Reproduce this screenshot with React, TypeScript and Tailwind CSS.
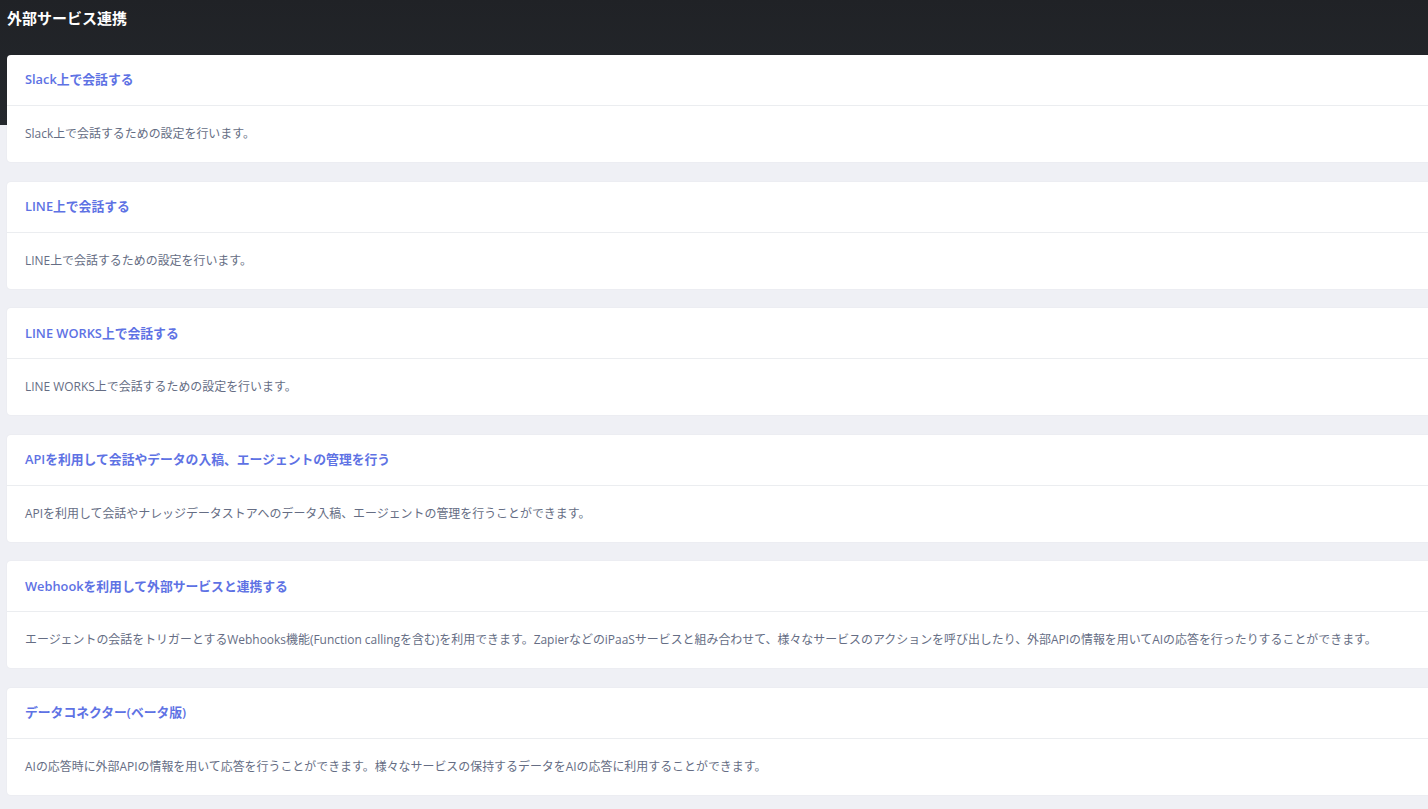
import React from "react";

const items = [
  { title: "Slack上で会話する", body: "Slack上で会話するための設定を行います。" },
  { title: "LINE上で会話する", body: "LINE上で会話するための設定を行います。" },
  { title: "LINE WORKS上で会話する", body: "LINE WORKS上で会話するための設定を行います。" },
  {
    title: "APIを利用して会話やデータの入稿、エージェントの管理を行う",
    body: "APIを利用して会話やナレッジデータストアへのデータ入稿、エージェントの管理を行うことができます。",
  },
  {
    title: "Webhookを利用して外部サービスと連携する",
    body: "エージェントの会話をトリガーとするWebhooks機能(Function callingを含む)を利用できます。ZapierなどのiPaaSサービスと組み合わせて、様々なサービスのアクションを呼び出したり、外部APIの情報を用いてAIの応答を行ったりすることができます。",
  },
  {
    title: "データコネクター(ベータ版)",
    body: "AIの応答時に外部APIの情報を用いて応答を行うことができます。様々なサービスの保持するデータをAIの応答に利用することができます。",
  },
];

export default function App() {
  return (
    <div
      className="relative w-[1428px] h-[809px] overflow-hidden bg-[#eff0f5]"
      style={{ fontFamily: '"Open Sans", "Noto Sans CJK JP", sans-serif' }}
    >
      <div className="absolute left-0 top-0 w-full h-[125px] bg-gradient-to-b from-[#202226] to-[#24282d]" />
      <div className="relative">
        <div className="h-[55px] pl-[7px] pt-[7px]">
          <h1 className="text-[15px] leading-[22px] font-bold text-white">外部サービス連携</h1>
        </div>
        <div className="flex flex-col gap-[19.6px] pl-[7px]">
          {items.map((it) => (
            <div
              key={it.title}
              className="w-[1460px] bg-white rounded-[4px] shadow-[0_0_2px_rgba(0,0,0,0.06)]"
            >
              <div className="h-[51px] flex items-center px-[18px] border-b border-[#ebedf0]">
                <span className="text-[12.8px] font-semibold text-[#5e72e4]">{it.title}</span>
              </div>
              <div className="h-[56px] flex items-center px-[18px]">
                <span className="text-[11.95px] text-[#656d84]">{it.body}</span>
              </div>
            </div>
          ))}
        </div>
      </div>
    </div>
  );
}
